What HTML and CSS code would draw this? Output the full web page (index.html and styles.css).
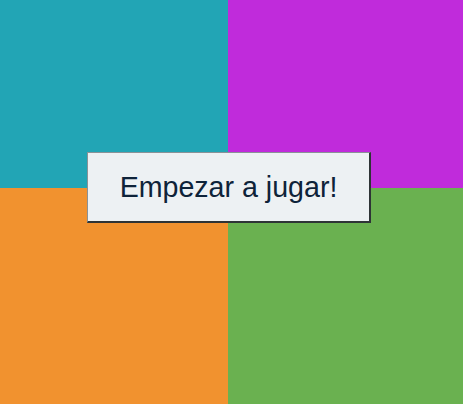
FILE: index.html
```html
<!DOCTYPE html>
<html lang="es">
<head>
<meta charset="utf-8">
<title>Simon</title>
<link rel="stylesheet" href="styles.css">
</head>
<body>
<div class="board">
  <div class="pad pad-teal"></div>
  <div class="pad pad-magenta"></div>
  <div class="pad pad-orange"></div>
  <div class="pad pad-green"></div>
  <button class="start">Empezar a jugar!</button>
</div>
</body>
</html>
```
FILE: styles.css
```css
html, body {
  margin: 0;
  padding: 0;
  width: 463px;
  height: 404px;
  overflow: hidden;
}
.board {
  position: relative;
  display: grid;
  grid-template-columns: 228px 1fr;
  grid-template-rows: 188px 1fr;
  width: 463px;
  height: 404px;
}
.pad-teal { background: #22a5b5; }
.pad-magenta { background: #c02bdb; }
.pad-orange { background: #f1922f; }
.pad-green { background: #6ab150; }
.start {
  position: absolute;
  left: 87px;
  top: 152px;
  width: 284px;
  height: 71px;
  box-sizing: border-box;
  margin: 0;
  padding: 0;
  background: #edf1f3;
  border: 1px solid #8a9297;
  border-right: 2px solid #2e3436;
  border-bottom: 2px solid #2e3436;
  font-family: "Liberation Sans", Arial, sans-serif;
  font-size: 28.6px;
  color: #0e2339;
  text-align: center;
  line-height: 1;
}
```
